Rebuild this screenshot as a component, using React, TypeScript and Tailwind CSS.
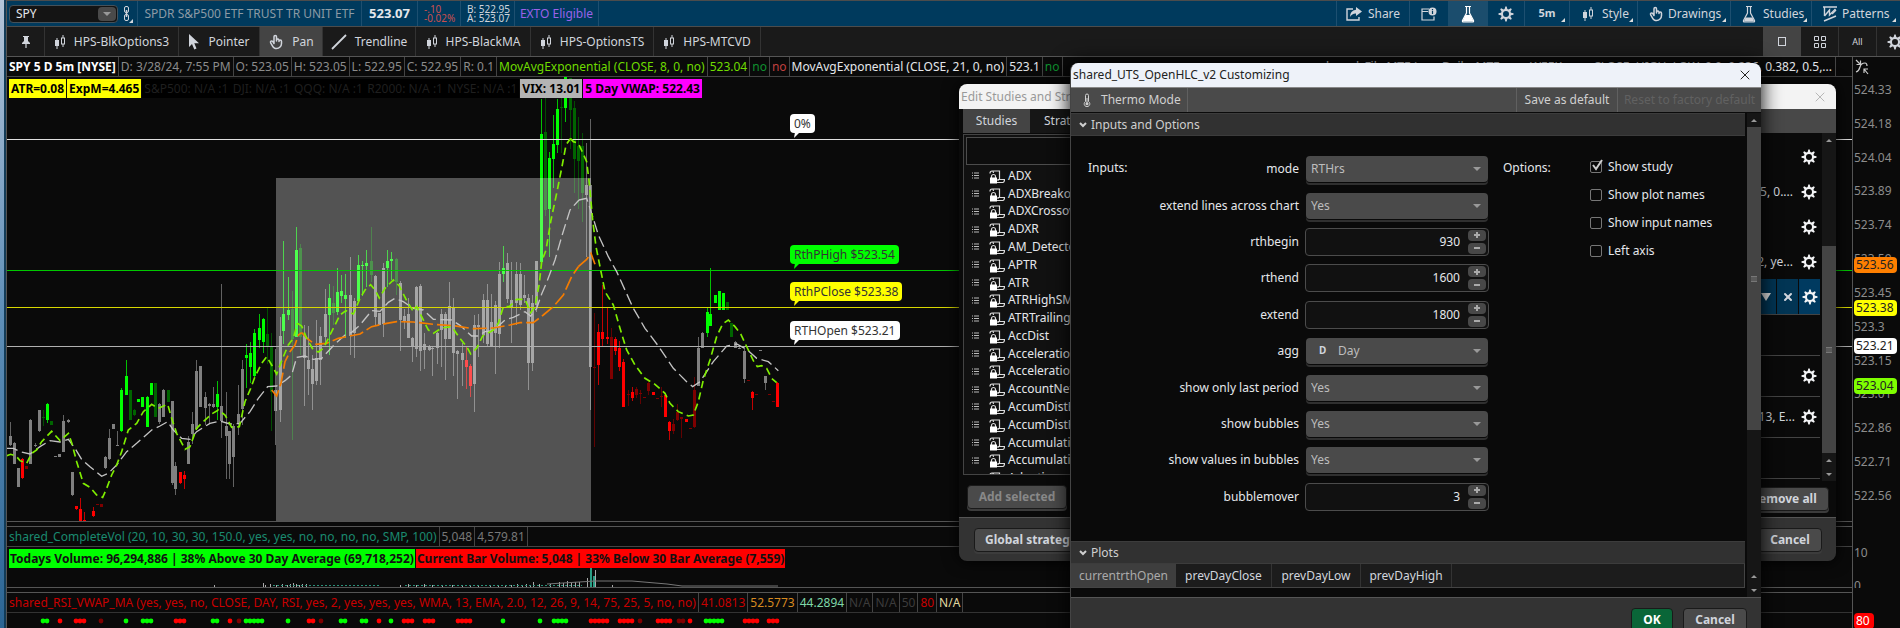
import React from "react";
import { X } from "lucide-react";
import { PiHandPointingBold } from "react-icons/pi";
import { clsx } from "clsx";

// Chart drawings use a grid of three units per pixel.
// Each bar: x, high, low, bodyTop, bodyBottom, colour key
interface Section {
  dx: number;
  dy: number;
  bars: string;
  fast: string;
  slow: string;
  vwap: string;
}

const barColors: Record<string, string> = {
  g: "#00ff00",
  d: "#006400",
  w: "#808080",
  r: "#ff0000",
  m: "#7f0000",
};

const sections: Section[] = [
  {
    dx: 0,
    dy: 270,
    bars:
      "32 995 1068 1037 1066 w,44 1055 1122 1059 1122 w,56 1134 1190 1134 1190 w,69 1105 1168 1107 1164 r,81 1128 1137 1128 1137 m,93 987 1122 989 1122 w,106 1058 1072 1065 1069 w,118 960 1026 960 1024 w,130 960 1008 981 984 d,143 940 998 941 990 g,155 994 1005 994 1004 d,168 1097 1101 1098 1101 w,180 1092 1101 1092 1101 w,192 975 1087 993 1086 w,206 986 999 989 996 w,217 1147 1217 1147 1216 w,229 1247 1260 1249 1258 r,242 1223 1292 1257 1292 r,254 1265 1292 1290 1292 r,280 1252 1281 1262 1279 r,292 1242 1245 1242 1245 m,306 1241 1252 1242 1251 m,317 1098 1137 1100 1135 w,329 1018 1110 1043 1108 w,342 1001 1017 1002 1017 w,353 1022 1068 1064 1068 w,366 893 1026 899 1023 g,379 810 916 857 915 g,391 899 990 899 990 d,405 957 977 960 975 d,417 927 936 927 936 g,428 920 951 920 951 g,442 918 1011 920 1010 g,454 879 915 879 915 g,466 879 982 879 982 d,479 939 1001 943 995 w,491 898 982 899 982 w,505 899 936 899 936 d,517 934 1185 934 1180 w,527 1116 1216 1128 1198 w,541 1147 1182 1147 1179 r,553 1143 1198 1156 1168 r,565 1038 1122 1056 1122 w,578 967 1062 1003 1031 w,590 810 1018 844 1017 w,602 828 950 828 950 w,616 906 1006 920 955 w,628 940 1003 942 948 w,640 892 953 942 950 w,653 872 990 912 951 g,664 583 1044 949 992 w,679 906 1168 1007 1038 w,690 1022 1168 1022 1122 w,701 1003 1190 1009 1100 w,716 886 1036 973 1002 w,727 810 1006 837 957 w,740 763 895 796 804 g,752 757 880 790 831 g,765 716 862 729 858 g,778 673 773 714 750 g,790 684 790 686 755 g,802 652 822 732 770 d,815 730 1022 768 905 d,827 778 1065 900 962 w,841 682 995 739 960 w,852 452 762 672 723 g,865 562 691 660 674 g,877 603 1050 658 748 d,889 410 740 480 740 g,901 462 795 474 740 d",
    fast: "20,1097 32,1093 48,1098 60,1112 80,1120 95,1090 110,1080 125,1055 155,1024 180,1052 205,1030 215,1058 230,1115 250,1180 270,1192 290,1215 308,1222 320,1195 335,1155 350,1125 365,1085 385,1020 410,1000 430,965 455,943 475,955 503,943 515,985 530,1030 555,1078 570,1070 590,1015 610,995 635,972 655,960 675,975 695,1012 718,1010 735,935 752,895 765,860 785,820 800,800 815,825 830,852 850,800 865,765 880,745 892,700",
    slow: "20,1075 40,1075 60,1085 90,1092 120,1070 150,1052 180,1056 205,1048 225,1075 245,1108 270,1130 305,1159 325,1150 350,1125 380,1085 410,1060 455,1020 480,1008 503,995 520,1020 545,1045 570,1048 590,1025 630,1000 660,993 690,1002 720,1000 750,965 775,925 803,890 830,888 855,872 875,855 890,802",
    vwap: "815,900 830,918 843,880 855,815 870,785 885,765 895,735 905,728",
  },
  {
    dx: 780,
    dy: 270,
    bars:
      "134 706 948 736 803 w,146 708 914 809 837 w,158 796 960 837 882 w,171 690 885 804 873 w,183 710 885 738 810 w,196 597 764 672 740 w,208 582 795 624 675 g,221 588 705 640 668 d,234 534 675 606 667 g,246 554 640 603 618 g,258 552 745 616 626 g,271 500 795 616 738 w,283 625 804 632 730 w,296 494 632 526 632 g,307 513 618 524 528 g,320 480 590 518 528 g,334 410 575 513 555 d,346 555 705 558 682 w,358 668 706 668 706 w,371 520 740 534 702 w,382 480 590 513 534 g,395 487 570 507 513 g,409 503 615 508 575 d,421 574 782 578 690 w,433 656 717 679 692 w,446 625 745 673 745 w,458 740 816 744 768 w,470 588 802 590 777 w,482 582 842 588 782 w,494 730 838 763 780 w,508 765 782 768 780 w,519 770 858 774 777 w,533 727 823 730 775 w,545 657 830 672 720 w,557 665 870 672 748 w,570 576 748 648 748 w,582 625 858 652 790 w,594 781 928 784 791 w,607 758 887 788 809 w,619 770 898 809 830 r,633 823 920 827 887 r,645 675 967 706 882 w,657 672 802 705 710 w,670 612 760 631 735 w,682 582 770 630 761 w,694 612 768 695 768 w,706 632 852 644 730 w,719 515 774 552 732 w,731 468 575 533 552 g,744 490 640 518 628 w,756 516 760 630 655 w,769 516 705 552 640 w,781 520 660 553 645 w,793 555 640 615 625 w,806 612 900 624 818 w,818 616 844 640 818 w,830 513 665 514 645 w,844 27 520 133 515 g,856 22 378 127 360 d,869 185 500 204 356 g,880 74 295 162 206 g,892 28 190 58 165 g,906 22 190 50 55 d,917 -38 97 -38 55 g,931 -36 178 -36 60 d,943 34 310 54 207 d",
    fast: "113,700 125,708 140,745 160,780 175,786 190,775 205,745 225,705 240,675 258,662 280,672 300,625 315,600 332,584 345,600 358,624 375,595 400,570 418,588 440,632 460,665 470,650 485,680 505,720 520,730 545,714 575,710 600,745 620,770 632,792 650,775 668,738 700,720 715,700 730,650 748,650 770,628 795,628 812,668 825,650 838,580 845,515 858,480 873,390 890,310 905,235 918,165 931,146",
    slow: "110,802 135,798 160,808 185,805 225,762 255,735 275,727 300,705 335,662 360,664 385,637 405,625 430,635 460,655 490,660 520,688 575,690 600,706 635,738 655,738 675,725 700,722 735,690 760,682 795,665 812,678 830,655 845,612 862,572 885,510 905,440 930,360 957,330",
    vwap: "125,728 145,748 165,763 200,760 235,745 300,732 335,710 380,700 410,695 460,696 520,703 580,707 640,716 700,714 750,705 780,698 820,698 850,675 880,650 910,615 935,560 955,530",
  },
  {
    dx: 1560,
    dy: 210,
    bars:
      "175 140 418 228 272 d,187 188 455 228 368 d,200 218 560 346 375 w,211 148 1020 346 891 w,225 728 1132 890 893 m,237 762 945 787 885 r,249 645 828 785 808 r,262 713 821 801 808 r,275 775 928 802 926 m,287 800 855 807 844 r,300 812 904 834 891 r,312 868 1010 876 1010 r,325 961 1008 971 975 m,337 952 992 966 984 r,350 952 985 958 976 m,362 960 1003 968 972 m,375 980 984 980 984 m,386 933 975 938 962 m,400 965 976 965 976 r,412 983 986 983 986 m,424 950 1010 979 982 m,437 972 1042 975 1041 r,448 1053 1110 1055 1084 r,462 1048 1093 1061 1084 m,474 1003 1054 1025 1051 m,486 1040 1104 1040 1048 m,499 1047 1056 1047 1056 r,511 1075 1078 1075 1078 m,523 920 1075 959 1070 m,537 800 948 834 947 w,548 786 835 789 835 w,562 713 800 725 790 g,573 595 768 732 767 g,586 676 698 676 698 g,599 662 720 662 719 g,611 668 720 670 719 g,622 696 720 697 719 d,636 758 802 759 801 d,648 813 834 815 834 w,660 832 837 833 836 w,673 838 940 842 926 w,685 930 934 931 934 m,698 963 1020 966 984 r,710 971 974 971 974 m,722 841 843 841 843 w,736 917 960 918 940 w,748 971 974 971 974 m,760 993 996 993 996 m,773 937 1011 940 1010 r",
    fast: "151,205 160,215 175,220 188,248 200,275 208,340 218,450 228,530 240,590 255,665 280,705 300,775 320,840 345,885 375,925 405,943 435,970 450,1000 475,1025 505,1038 520,1035 535,995 550,930 570,870 590,800 608,762 625,750 645,770 662,792 685,840 700,872 712,890 725,887 740,895 755,925 770,938",
    slow: "177,390 200,385 215,430 235,495 265,560 290,605 340,715 375,775 415,828 460,895 500,935 518,950 540,935 580,875 620,828 650,822 680,838 710,865 745,875 775,902",
    vwap: "175,590 200,568 213,550 225,583",
  },
];

const levels = [
  { y: 62, color: "#e0e0e0" },
  { y: 193, color: "#00c800" },
  { y: 230, color: "#d8d800" },
  { y: 269, color: "#b0b0b0" },
];

const GearIcon = ({ className = "" }: { className?: string }) => (
  <svg viewBox="0 0 16 16" className={className} fill="none" stroke="currentColor">
    <circle cx="8" cy="8" r="4" strokeWidth="2" />
    {[0, 45, 90, 135, 180, 225, 270, 315].map((a) => (
      <path key={a} d="M6.4 4 L7.3 .5 H8.7 L9.6 4 Z" fill="currentColor" stroke="none" transform={`rotate(${a} 8 8)`} />
    ))}
  </svg>
);

const CandlesIcon = () => (
  <svg viewBox="0 0 12 14" className="w-3 h-3.5" fill="none" stroke="currentColor">
    <path d="M3 3v11" />
    <rect x="1" y="5" width="4" height="6" fill="currentColor" stroke="none" />
    <path d="M9 0v3M9 9v3" />
    <rect x="7.5" y="3" width="3" height="6" />
  </svg>
);

const FlaskIcon = ({ filled = false }: { filled?: boolean }) => (
  <svg viewBox="0 0 16 18" className="w-4 h-[18px]" fill="none" stroke="currentColor" strokeWidth="1.2">
    <path d="M5 1.5h6M6.5 2v6L2.5 15.5q-.4 1.5 1 1.5h9q1.4 0 1-1.5L9.5 8V2" />
    <path d={filled ? "M5.5 10h5l3 6.5h-11z" : "M4.5 12.5h7l1.7 4H2.8z"} fill="currentColor" stroke="none" />
  </svg>
);

const PinIcon = () => (
  <svg viewBox="0 0 10 14" className="w-2.5 h-3.5" fill="currentColor">
    <path d="M2 1h6v1H7v4l2 2v1H5.6v4H4.4V9H1V8l2-2V2H2z" />
  </svg>
);

const CursorIcon = () => (
  <svg viewBox="0 0 12 16" className="w-3 h-4" fill="currentColor">
    <path d="M1 0v13l3-3 2.3 5.4 2.2-1L6.3 9.3H11z" />
  </svg>
);

const TrendIcon = () => (
  <svg viewBox="0 0 16 16" className="size-4" stroke="currentColor" strokeWidth="1.8">
    <path d="M1 15L15 1" />
  </svg>
);

const LinkIcon = () => (
  <svg viewBox="0 0 10 18" className="w-2.5 h-[18px] text-gray-300" fill="none" stroke="currentColor">
    <rect x="1.5" y="1.5" width="4" height="6" rx="1.5" />
    <rect x="1.5" y="9.5" width="4" height="6" rx="1.5" />
    <path d="M3.5 5v7" strokeWidth="1.5" />
    <path d="M10 14v4H6z" fill="currentColor" stroke="none" />
  </svg>
);

const ShareIcon = () => (
  <svg viewBox="0 0 16 14" className="w-4 h-3.5" fill="none" stroke="currentColor" strokeWidth="1.4">
    <path d="M7 2H1v11h12v-3" />
    <path d="M10 0l6 4.5-6 4.5V6.5Q6 6.3 4 10 4 3.5 10 2.8z" fill="currentColor" stroke="none" />
  </svg>
);

const InfoWindowIcon = () => (
  <svg viewBox="0 0 16 14" className="w-4 h-3.5" fill="none" stroke="currentColor" strokeWidth="1.2">
    <path d="M8 2H1v11h12V9.5M1 4.5h6" />
    <circle cx="11.5" cy="4.5" r="4" fill="currentColor" stroke="none" />
    <path d="M11.5 2v1.2M11.5 4v3" stroke="#003a5d" />
  </svg>
);

const PatternIcon = () => (
  <svg viewBox="0 0 16 16" className="size-4" fill="none" stroke="currentColor" strokeWidth="1.4">
    <path d="M1 1h14M2.5 1v9M2.5 10l5-6v5l6-6M2 15l12-5" />
    <path d="M10 8l4-4" />
  </svg>
);

const ThermoIcon = () => (
  <svg viewBox="0 0 8 14" className="w-2 h-3.5" fill="none" stroke="currentColor">
    <path d="M2.5 8.5V2.5a1.5 1.5 0 0 1 3 0v6a2.8 2.8 0 1 1-3 0z" />
    <circle cx="4" cy="10.7" r="1.5" fill="currentColor" stroke="none" />
    <path d="M4 5v6" />
  </svg>
);

const ScriptLockIcon = () => (
  <svg viewBox="0 0 16 14" className="w-4 h-3.5" fill="none" stroke="#ddd" strokeWidth="1.2">
    <path d="M1 3.5Q1 1 3 1h7.5v8M3 1q1.5 0 1.5 2M8 12.5h6q1.5-.5 1.5-3H9v1.5" />
    <path d="M2.5 8V6.5a2 2 0 0 1 4 0V8" />
    <rect x="1" y="7.5" width="7" height="6" fill="#fff" stroke="none" />
  </svg>
);

const ListIcon = () => (
  <svg viewBox="0 0 7 7" className="size-[7px]" stroke="#bbb">
    <path d="M0 1h1M2 1h5M0 3.5h1M2 3.5h5M0 6h1M2 6h5" />
  </svg>
);

const Corner = () => (
  <svg viewBox="0 0 4 4" className="size-1 absolute right-1 bottom-1" fill="#ddd">
    <path d="M4 0v4H0z" />
  </svg>
);

const Triangle = ({ up = false, className = "" }: { up?: boolean; className?: string }) => (
  <svg viewBox="0 0 8 4" className={clsx("w-2 h-1", className)} fill="#999">
    <path d={up ? "M0 4l4-4 4 4z" : "M0 0h8L4 4z"} />
  </svg>
);

const TopBar = () => (
  <header className="flex h-[27px] shrink-0 border-t border-b border-[#4c4c4c] bg-[#003a5d] text-gray-300">
    <div className="relative ml-0.5 my-1 w-[109px]">
      <input aria-label="Symbol" defaultValue="SPY" className="w-full h-[18px] rounded-sm border border-[#44515a] bg-[#141414] px-1.5 text-gray-200 outline-none" />
      <button aria-label="Symbol list" className="absolute right-0.5 top-0.5 w-[18px] h-3.5 bg-[#4a4a4a] rounded-sm grid place-items-center">
        <Triangle />
      </button>
    </div>
    <div className="w-5 flex items-center justify-center border-r border-[#1d4f70]"><LinkIcon /></div>
    <div className="w-56 flex items-center justify-center text-[#8c9ba5] border-r border-[#1d4f70] whitespace-nowrap">SPDR S&amp;P500 ETF TRUST TR UNIT ETF</div>
    <div className="w-14 flex items-center justify-center font-bold text-[13px] text-gray-200 border-r border-[#1d4f70]">523.07</div>
    <div className="w-[43px] pl-1.5 flex flex-col justify-center text-[10px] leading-[9px] text-[#c8504f] border-r border-[#1d4f70]">
      <span>-.10</span>
      <span>-0.02%</span>
    </div>
    <div className="w-[54px] pl-1.5 flex flex-col justify-center text-[10px] leading-[9px] border-r border-[#1d4f70] whitespace-nowrap">
      <span>B: 522.95</span>
      <span>A: 523.07</span>
    </div>
    <div className="w-[84px] flex items-center justify-center text-[#9a62e8] border-r border-[#1d4f70] whitespace-nowrap">EXTO Eligible</div>
    <div className="flex-1" />
    <button className="w-[74px] flex items-center justify-center gap-1.5 border-l border-r border-[#1d4f70]"><ShareIcon />Share</button>
    <button aria-label="Info" className="w-[38px] grid place-items-center"><InfoWindowIcon /></button>
    <button aria-label="Edit studies" className="w-10 grid place-items-center bg-[#1b4d6d] text-white"><FlaskIcon filled /></button>
    <button aria-label="Settings" className="w-[37px] grid place-items-center border-r border-[#1d4f70]"><GearIcon className="size-4" /></button>
    <button className="relative w-[45px] font-bold text-[11px] border-r border-[#1d4f70]">5m<Corner /></button>
    <button className="relative w-[68px] pl-3 flex items-center gap-2 border-r border-[#1d4f70]"><CandlesIcon />Style<Corner /></button>
    <button className="relative w-[93px] pl-2.5 flex items-center gap-1 border-r border-[#1d4f70]"><PiHandPointingBold className="size-4" />Drawings<Corner /></button>
    <button className="relative w-[81px] pl-2.5 flex items-center gap-1.5 border-r border-[#1d4f70]"><FlaskIcon />Studies<Corner /></button>
    <button className="relative w-[88px] pl-2.5 flex items-center gap-1"><PatternIcon />Patterns<Corner /></button>
  </header>
);

const tools = [
  { label: "HPS-BlkOptions3", icon: <CandlesIcon />, width: "w-[134px]" },
  { label: "Pointer", icon: <CursorIcon />, width: "w-[81px]" },
  { label: "Pan", icon: <PiHandPointingBold className="size-4" />, width: "w-[63px]", active: true },
  { label: "Trendline", icon: <TrendIcon />, width: "w-[93px]" },
  { label: "HPS-BlackMA", icon: <CandlesIcon />, width: "w-[115px]" },
  { label: "HPS-OptionsTS", icon: <CandlesIcon />, width: "w-[123px]" },
  { label: "HPS-MTCVD", icon: <CandlesIcon />, width: "w-[107px]" },
];

const ToolBar = () => (
  <nav className="flex h-[30px] shrink-0 bg-[#1a1a1a] text-gray-300 border-b border-[#555]">
    <button aria-label="Pin" className="w-[38px] grid place-items-center border-r border-[#333]"><PinIcon /></button>
    {tools.map((t) => (
      <button key={t.label} className={clsx(t.width, "flex items-center justify-center gap-2 border-r border-[#333] whitespace-nowrap", t.active && "bg-[#444]")}>
        {t.icon}
        {t.label}
      </button>
    ))}
    <div className="flex-1" />
    <button aria-label="Single" className="w-[38px] grid place-items-center bg-[#444]">
      <svg viewBox="0 0 8 9" className="w-2 h-[9px]" fill="none" stroke="currentColor"><rect x=".5" y=".5" width="7" height="8" /></svg>
    </button>
    <button aria-label="Grid" className="w-[38px] grid place-items-center border-r border-[#333]">
      <svg viewBox="0 0 12 12" className="size-3" fill="none" stroke="currentColor">
        <path d="M.5.5h4v4h-4zM7.5.5h4v4h-4zM.5 7.5h4v4h-4zM7.5 7.5h4v4h-4z" />
      </svg>
    </button>
    <button className="w-[38px] text-[9px] border-r border-[#333]">All</button>
    <button aria-label="Grid settings" className="w-[23px] pl-2.5 overflow-hidden"><GearIcon className="size-4" /></button>
  </nav>
);

const status = [
  ["D: 3/28/24, 7:55 PM", "text-[#8c8c8c]"],
  ["O: 523.05", "text-[#8c8c8c]"],
  ["H: 523.05", "text-[#8c8c8c]"],
  ["L: 522.95", "text-[#8c8c8c]"],
  ["C: 522.95", "text-[#8c8c8c]"],
  ["R: 0.1", "text-[#8c8c8c]"],
  ["MovAvgExponential (CLOSE, 8, 0, no)", "text-[#6fdc00]"],
  ["523.04", "text-[#6fdc00]"],
  ["no", "text-[#109030]"],
  ["no", "text-[#c04040]"],
  ["MovAvgExponential (CLOSE, 21, 0, no)", "text-gray-200"],
  ["523.1", "text-gray-200"],
  ["no", "text-[#109030]"],
];

const StatusRow = () => (
  <div className="flex h-5 shrink-0 border-b border-[#444] leading-[19px] whitespace-nowrap overflow-hidden">
    <span className="px-0.5 font-bold text-white border-r border-[#444]">SPY 5 D 5m [NYSE]</span>
    {status.map(([text, color], i) => (
      <span key={i} className={clsx("px-0.5 border-r border-[#444]", color)}>{text}</span>
    ))}
    <span className="flex-1" />
    <span className="px-[3px] mr-4 text-gray-200 border-r border-[#444]">
      shared_Fib_MTF (yes, Daily, MTF, yes, WEEK, yes, CLOSE, HIGH, LOW, 0.0, 0.236, 0.382, 0.5,...
    </span>
  </div>
);

const Bubble = ({ className, children }: { className: string; children: React.ReactNode }) => (
  <div className={clsx("absolute left-[783px] h-[19px] px-1 rounded leading-[19px] text-[#333]", className)}>
    {children}
    <svg viewBox="0 0 6 6" className="absolute left-1 top-[18px] size-1.5"><path d="M1 0h5L0 6z" /></svg>
  </div>
);

const PriceChart = () => (
  <div className="relative flex-1 overflow-hidden border-b border-[#555]">
    <svg className="absolute inset-0 size-full">
      <g transform="translate(-7 -77) scale(0.33333)" shapeRendering="crispEdges">
        {sections.map((s) => (
          <g key={s.dx} transform={`translate(${s.dx} ${s.dy})`}>
            {s.bars.split(",").map((b) => {
              const [x, hi, lo, top, bot, c] = b.split(" ");
              return (
                <g key={x} fill={barColors[c]}>
                  <rect x={+x - 1.5} y={+hi} width={3} height={+lo - +hi} opacity={0.75} />
                  <rect x={+x - 4.5} y={+top} width={9} height={Math.max(3, +bot - +top)} />
                </g>
              );
            })}
          </g>
        ))}
      </g>
      <rect x="269" y="101" width="315" height="100%" fill="#fff" opacity="0.3" />
      {levels.map((l) => (
        <rect key={l.y} x="0" y={l.y} width="100%" height="1" fill={l.color} />
      ))}
      <g transform="translate(-7 -77) scale(0.33333)" fill="none">
        {sections.map((s) => (
          <g key={s.dx} transform={`translate(${s.dx} ${s.dy})`}>
            <polyline points={s.slow} stroke="#c4c4c4" strokeWidth="4" strokeDasharray="34 14" />
            <polyline points={s.vwap} stroke="#f57c00" strokeWidth="5" strokeDasharray="42 12" />
            <polyline points={s.fast} stroke="#7fee00" strokeWidth="5" strokeDasharray="22 13" />
          </g>
        ))}
      </g>
    </svg>
    <div className="relative flex pt-0.5 pl-0.5 gap-px font-bold leading-[19px] text-black whitespace-nowrap">
      <span className="bg-[#ffff00] px-0.5">ATR=0.08</span>
      <span className="bg-[#ffff00] px-0.5">ExpM=4.465</span>
      <div className="flex w-[377px] justify-between overflow-hidden bg-black font-normal text-[#1f1f1f]">
        <span className="px-0.5">S&amp;P500: N/A :1</span>
        <span className="px-0.5">DJI: N/A :1</span>
        <span className="px-0.5">QQQ: N/A :1</span>
        <span className="px-0.5">R2000: N/A :1</span>
        <span className="px-0.5">NYSE: N/A :1</span>
      </div>
      <span className="bg-[#b4b4b4] px-0.5">VIX: 13.01</span>
      <span className="bg-[#ff00ff] px-0.5">5 Day VWAP: 522.43</span>
    </div>
    <Bubble className="top-[37px] bg-white fill-white">0%</Bubble>
    <Bubble className="top-[168px] bg-[#00ff00] fill-[#00ff00]">RthPHigh $523.54</Bubble>
    <Bubble className="top-[205px] bg-[#ffff00] fill-[#ffff00]">RthPClose $523.38</Bubble>
    <Bubble className="top-[244px] bg-white fill-white">RTHOpen $523.21</Bubble>
  </div>
);

const volumeBars = [
  [214, 2], [263, 4], [265, 2], [270, 3], [276, 2], [282, 3], [287, 2], [290, 3], [293, 4], [296, 3], [299, 2], [302, 3], [306, 3], [400, 2], [408, 3], [416, 2], [424, 3], [432, 2], [442, 2],
  [452, 2], [462, 2], [470, 2], [478, 2], [490, 2], [498, 2], [505, 2], [511, 2], [517, 3], [522, 2], [526, 3], [530, 2], [533, 5], [539, 3], [550, 3], [559, 5], [563, 4], [567, 6], [571, 4], [575, 5], [579, 5], [587, 9], [595, 17], [612, 2],
];

const VolumePanel = () => (
  <section className="relative h-[62px] mt-1 shrink-0 border-t border-b border-[#555]">
    <div className="flex h-5 border-b border-[#444] leading-[19px] text-[#777]">
      <span className="px-0.5 text-[#1a8a70]">shared_CompleteVol (20, 10, 30, 30, 150.0, yes, yes, no, no, no, no, SMP, 100)</span>
      <span className="px-0.5 border-l border-[#444]">5,048</span>
      <span className="px-0.5 border-l border-r border-[#444]">4,579.81</span>
    </div>
    <svg className="absolute left-0 bottom-0 w-full h-5" shapeRendering="crispEdges">
      {volumeBars.map(([x, h]) => <rect key={x} x={x - 7} y={20 - h} width="1" height={h} fill="#aaa" />)}
      <path d="M266 18.5H372M398 18.5H575" stroke="#2a8f78" strokeDasharray="2 2" />
      <rect x="583" y="0" width="2" height="20" fill="#2a9d84" />
      <rect x="586" y="9" width="2" height="11" fill="#2a9d84" />
      <path d="M540 17L588 14H625L660 17L675 19H771" stroke="#777" fill="none" shapeRendering="auto" />
    </svg>
    <div className="relative flex pt-0.5 pl-0.5 gap-px font-bold leading-[19px] text-[#111] whitespace-nowrap">
      <span className="bg-[#00ff00] px-px">Todays Volume: 96,294,886 | 38% Above 30 Day Average (69,718,252)</span>
      <span className="bg-[#ff0000] px-px">Current Bar Volume: 5,048 | 33% Below 30 Bar Average (7,559)</span>
    </div>
  </section>
);

// start x, count, colour key
const dots: [number, number, string][] = [
  [43, 2, "g"], [60, 1, "r"], [76, 3, "r"], [101, 1, "m"], [126, 1, "g"], [143, 3, "g"], [176, 3, "r"], [213, 2, "g"], [230, 1, "r"], [239, 1, "m"],
  [246, 5, "g"], [288, 1, "g"], [309, 2, "r"], [321, 1, "m"], [341, 2, "g"], [362, 2, "g"], [379, 1, "r"], [391, 1, "g"], [404, 3, "r"], [425, 3, "r"],
  [458, 4, "r"], [503, 1, "g"], [540, 1, "g"], [554, 4, "g"], [591, 5, "r"], [620, 4, "r"], [640, 1, "m"], [658, 4, "r"], [679, 2, "m"], [690, 1, "r"],
  [706, 5, "g"], [745, 4, "r"], [769, 3, "r"],
];

const rsiValues = [
  ["41.0813", "text-[#c80000]"],
  ["52.5773", "text-[#d88a20]"],
  ["44.2894", "text-[#7fd8a8]"],
  ["N/A", "text-[#3c3c3c]"],
  ["N/A", "text-[#3c3c3c]"],
  ["50", "text-[#3c3c3c]"],
  ["80", "text-[#c80000]"],
  ["N/A", "text-[#e0d8a0]"],
];

const RsiPanel = () => (
  <section className="h-9 mt-1 shrink-0 border-t border-[#555]">
    <div className="flex h-5 border-b border-[#333] leading-[19px]">
      <span className="px-0.5 text-[#c80000]">shared_RSI_VWAP_MA (yes, yes, no, CLOSE, DAY, RSI, yes, 2, yes, yes, yes, WMA, 13, EMA, 2.0, 12, 26, 9, 14, 75, 25, 5, no, no)</span>
      {rsiValues.map(([v, color], i) => <span key={i} className={clsx("px-0.5 border-l border-[#444]", color, i === 7 && "border-r")}>{v}</span>)}
    </div>
    <svg className="w-full h-4">
      {dots.map(([x, n, c]) =>
        Array.from({ length: n }, (_, i) => <circle key={`${x}-${i}`} cx={x - 7 + i * 4} cy="8" r="2.4" fill={barColors[c]} />)
      )}
    </svg>
  </section>
);

const prices = ["524.33", "524.18", "524.04", "523.89", "523.74", "523.59", "523.45", "523.3", "523.15", "523.01", "522.86", "522.71", "522.56"];

const PriceAxis = () => (
  <aside className="relative w-[48px] shrink-0 border-l border-[#555] text-[#8c8c8c]">
    <svg viewBox="0 0 14 16" className="absolute left-0.5 top-0.5 w-3.5 h-4" fill="none" stroke="#ccc" strokeWidth="1.2">
      <path d="M1 1l4 4M5.5 1.5v4h-4M1 13q3-1 4-5t5-4q2 0 2 3M9 10l4 5M9 14v-4h4" />
    </svg>
    <div className="h-[422px] mt-[25px] flex flex-col justify-between pl-px leading-4">
      {prices.map((p) => <span key={p}>{p}</span>)}
    </div>
    <span className="absolute left-px top-[200px] w-[43px] rounded-sm px-0.5 leading-4 bg-[#ff7f00] text-[#222]">523.56</span>
    <span className="absolute left-px top-[243px] w-[43px] rounded-sm px-0.5 leading-4 bg-[#ffff00] text-[#222]">523.38</span>
    <span className="absolute left-px top-[281px] w-[43px] rounded-sm px-0.5 leading-4 bg-white text-[#222]">523.21</span>
    <span className="absolute left-px top-[321px] w-[43px] rounded-sm px-0.5 leading-4 bg-[#7fff00] text-[#222]">523.04</span>
    <span className="absolute left-px top-[488px] leading-4">10</span>
    <span className="absolute left-px top-[521px] leading-4 h-2.5 overflow-hidden">0</span>
    <span className="absolute left-px top-[556px] w-5 rounded-sm px-0.5 leading-4 bg-[#ff0000] text-white">80</span>
  </aside>
);

const studies = [
  "ADX", "ADXBreakouts", "ADXCrossover", "ADXR", "AM_Detector", "APTR", "ATR", "ATRHighSMABreakouts", "ATRTrailingStop", "AccDist",
  "AccelerationBands", "AccelerationDeceleration", "AccountNetLiq", "AccumDistBuyPr", "AccumDistPrVol", "AccumulationDistribution", "AccumulationSwingIndex", "Adaptive",
];

const dialogButton = "h-6 rounded-sm border border-[#1a1a1a] bg-[#4a4a4a] font-bold text-gray-300 shadow-[0_2px_0_#3c3c3c] whitespace-nowrap";

const ScrollArrow = ({ up = false }: { up?: boolean }) => (
  <button aria-label={up ? "Scroll up" : "Scroll down"} className="h-3.5 w-full grid place-items-center"><Triangle up={up} className="w-1.5 h-[3px]" /></button>
);

const Grip = () => (
  <span className="w-1.5 h-1.5 border-y border-[#777] bg-[#5a5a5a]" />
);

const gear = <GearIcon className="size-4 text-gray-100" />;

const StudiesDialog = () => (
  <div className="absolute left-[959px] top-[84px] w-[877px] h-[477px] flex flex-col rounded-lg overflow-hidden bg-[#0a0a0a] shadow-[0_0_16px_#000]">
    <div className="h-[25px] shrink-0 px-0.5 flex items-center justify-between bg-[#f3f3f3] text-[#999]">
      <span>Edit Studies and Strategies</span>
      <button aria-label="Close" className="pr-1.5"><X className="size-4" strokeWidth={1} /></button>
    </div>
    <div className="flex-1 flex min-h-0">
      <div className="w-[400px] pl-1 flex flex-col">
        <div className="flex h-6 text-gray-300">
          <button className="w-[67px] bg-[#444]">Studies</button>
          <button className="px-3.5 bg-[#161616]">Strategies</button>
        </div>
        <div className="h-[341px] mt-px border border-[#444] bg-[#111]">
          <input aria-label="Search studies" className="block m-0.5 w-[380px] h-7 border border-[#4c4c4c] bg-[#0d0d0d] outline-none" />
          <div className="h-[307px] overflow-hidden">
            <ul className="h-[320px] grid auto-rows-fr text-gray-200">
              {studies.map((s) => (
                <li key={s} className="flex items-center pl-2 min-h-0 leading-4">
                  <ListIcon />
                  <span className="ml-2.5 mr-[3px] pt-0.5"><ScriptLockIcon /></span>
                  {s}
                </li>
              ))}
            </ul>
          </div>
        </div>
        <button disabled className={clsx(dialogButton, "w-[100px] ml-1 mt-2.5 text-[#888]!")}>Add selected</button>
      </div>
      <div className="flex-1 flex flex-col">
        <div className="h-6 bg-[#484848]" />
        <div className="flex h-[348px]">
          <div className="flex-1 flex flex-col pt-1.5 text-gray-300">
            {["", "5, 0....", "", "2, ye..."].map((t, i) => (
              <div key={i} className="h-[35px] flex items-center justify-end gap-2 pr-[3px]">
                <span>{t}</span>{gear}
              </div>
            ))}
            <div className="h-9 flex justify-end border-b border-[#444]">
              <button aria-label="Move down" className="w-[22px] bg-[#023554] grid place-items-center border-r border-[#0a0a0a]">
                <svg viewBox="0 0 10 8" className="w-2.5 h-2" fill="#ddd"><path d="M0 0h10L5 8z" /></svg>
              </button>
              <button aria-label="Remove" className="w-[22px] bg-[#023554] grid place-items-center border-r border-[#0a0a0a]"><X className="size-3" strokeWidth={4} /></button>
              <button aria-label="Study settings" className="w-[21px] bg-[#003a60] grid place-items-center">{gear}</button>
            </div>
            <div className="h-[41px] border-b border-[#444]" />
            <div className="h-[41px] border-b border-[#444] flex items-center justify-end pr-[3px]">{gear}</div>
            <div className="h-[41px] border-b border-[#444] flex items-center justify-end gap-1.5 pr-[3px]"><span>13, E...</span>{gear}</div>
            <div className="h-[41px] border-b border-[#444]" />
          </div>
          <div className="w-3.5 ml-0.5 flex flex-col bg-[#161616]">
            <ScrollArrow up />
            <div className="mt-[99px] h-[207px] bg-[#444] grid place-items-center"><Grip /></div>
            <ScrollArrow up />
            <ScrollArrow />
          </div>
        </div>
        <button className={clsx(dialogButton, "w-[90px] ml-auto mr-[7px] mt-1.5")}>Remove all</button>
      </div>
    </div>
    <div className="h-11 shrink-0 flex items-center justify-between pl-[15px] pr-3.5 border-t border-[#555] bg-[#333]">
      <button className={clsx(dialogButton, "px-2.5")}>Global strategy settings...</button>
      <button className={clsx(dialogButton, "w-16")}>Cancel</button>
    </div>
  </div>
);

interface FieldDef {
  label: string;
  value: string;
  kind: "select" | "number";
  prefix?: string;
}

const fields: FieldDef[] = [
  { label: "mode", value: "RTHrs", kind: "select" },
  { label: "extend lines across chart", value: "Yes", kind: "select" },
  { label: "rthbegin", value: "930", kind: "number" },
  { label: "rthend", value: "1600", kind: "number" },
  { label: "extend", value: "1800", kind: "number" },
  { label: "agg", value: "Day", kind: "select", prefix: "D" },
  { label: "show only last period", value: "Yes", kind: "select" },
  { label: "show bubbles", value: "Yes", kind: "select" },
  { label: "show values in bubbles", value: "Yes", kind: "select" },
  { label: "bubblemover", value: "3", kind: "number" },
];

const Field = ({ field }: { field: FieldDef }) => {
  const id = field.label.replace(/ /g, "-");
  return (
    <div className="flex items-center justify-end gap-1.5">
      <label htmlFor={id} className="text-gray-200">{field.label}</label>
      {field.kind === "select" ? (
        <div className="relative w-[184px] px-px">
          {field.prefix && <span className="absolute left-3.5 top-[5px] text-[10px] font-bold text-gray-300">{field.prefix}</span>}
          <select
            id={id}
            className={clsx("block w-full h-[26px] appearance-none rounded-sm bg-[#4a4a4a] text-[#bdbdbd] outline-none shadow-[0_1px_0_#0a0a0a,0_3px_0_#303030]", field.prefix ? "pl-8" : "pl-[5px]")}
          >
            <option>{field.value}</option>
          </select>
          <Triangle className="absolute right-2 top-[11px]" />
        </div>
      ) : (
        <div className="w-[184px] h-7 flex items-center rounded-sm border border-[#4c4c4c] bg-[#111]">
          <input id={id} defaultValue={field.value} className="flex-1 min-w-0 pr-2 text-right text-gray-200 bg-transparent outline-none" />
          <div className="flex flex-col gap-0.5 pr-0.5 text-[#aaa]">
            <button aria-label="Increase" className="w-[18px] h-[11px] rounded-sm bg-[#484848] grid place-items-center">
              <svg viewBox="0 0 6 6" className="size-1.5" stroke="currentColor" strokeWidth="2"><path d="M3 0v6M0 3h6" /></svg>
            </button>
            <button aria-label="Decrease" className="w-[18px] h-[11px] rounded-sm bg-[#484848] grid place-items-center">
              <svg viewBox="0 0 6 6" className="size-1.5" stroke="currentColor" strokeWidth="2"><path d="M0 3h6" /></svg>
            </button>
          </div>
        </div>
      )}
    </div>
  );
};

const CheckOption = ({ label, checked = false }: { label: string; checked?: boolean }) => (
  <label className="relative h-7 flex items-center gap-1.5">
    <input type="checkbox" defaultChecked={checked} className="size-3 appearance-none rounded-xs border border-[#777]" />
    {checked && (
      <svg viewBox="0 0 12 12" className="absolute left-0.5 top-1.5 size-3" fill="none" stroke="#ccc" strokeWidth="2"><path d="M1 6l3 4 6-9" /></svg>
    )}
    {label}
  </label>
);

const SectionHeader = ({ children }: { children: React.ReactNode }) => (
  <h3 className="h-[23px] shrink-0 pl-2 flex items-center gap-1 bg-[#313131] border-y border-[#3c3c3c] text-[#cfcfcf]">
    <svg viewBox="0 0 8 6" className="w-2 h-1.5" fill="none" stroke="currentColor" strokeWidth="2"><path d="M1 1l3 3 3-3" /></svg>
    {children}
  </h3>
);

const CustomizingDialog = () => (
  <div className="absolute left-[1070px] top-[63px] w-[691px] h-[600px] flex flex-col rounded-t-lg overflow-hidden border-l border-[#444] bg-[#0a0a0a] shadow-[0_0_20px_#000]">
    <div className="h-6 shrink-0 pl-0.5 pr-2 flex items-center justify-between bg-[#eef2f9] text-[#222]">
      <span>shared_UTS_OpenHLC_v2 Customizing</span>
      <button aria-label="Close"><X className="size-4" strokeWidth={1.5} /></button>
    </div>
    <div className="h-[25px] shrink-0 flex bg-[#4a4a4a] border-t border-[#888] text-[#d0d0d0]">
      <button className="w-[117px] pl-3 flex items-center gap-2.5 border-r border-[#606060]"><ThermoIcon />Thermo Mode</button>
      <span className="flex-1" />
      <button className="w-[101px] border-l border-[#606060]">Save as default</button>
      <button disabled className="w-[144px] border-l border-[#606060] text-[#616161]">Reset to factory default</button>
    </div>
    <div className="h-[485px] pt-px flex shrink-0">
      <div className="flex-1 flex flex-col">
        <SectionHeader>Inputs and Options</SectionHeader>
        <div className="flex h-[405px] pt-[15px] text-gray-200">
          <p className="pl-[17px] pt-2">Inputs:</p>
          <div className="h-[364px] flex-1 grid auto-rows-fr">
            {fields.map((f) => <Field key={f.label} field={f} />)}
          </div>
          <p className="w-[101px] pl-3.5 pt-2">Options:</p>
          <div className="w-[155px] pt-0.5">
            <CheckOption label="Show study" checked />
            <CheckOption label="Show plot names" />
            <CheckOption label="Show input names" />
            <CheckOption label="Left axis" />
          </div>
        </div>
        <SectionHeader>Plots</SectionHeader>
        <div className="flex h-6 bg-[#1c1c1c] border-b border-r border-[#444] text-gray-300">
          <button className="w-[105px] bg-[#3e3e3e] text-[#aaa]">currentrthOpen</button>
          <button className="w-[96px] border-r border-[#333]">prevDayClose</button>
          <button className="w-[89px] border-r border-[#333]">prevDayLow</button>
          <button className="w-[91px] border-r border-[#333]">prevDayHigh</button>
        </div>
      </div>
      <div className="w-3.5 ml-0.5 flex flex-col bg-[#161616]">
        <ScrollArrow up />
        <div className="h-[303px] bg-[#444] grid place-items-center"><Grip /></div>
        <div className="flex-1" />
        <ScrollArrow up />
        <ScrollArrow />
      </div>
    </div>
    <div className="flex-1 flex justify-end gap-2.5 pt-2.5 pr-3.5 bg-[#333] border-t border-[#555]">
      <button className="h-6 w-[42px] rounded-sm border border-[#1a1a1a] bg-[#0a6638] font-bold text-white">OK</button>
      <button className={clsx(dialogButton, "w-16")}>Cancel</button>
    </div>
  </div>
);

export default function App() {
  return (
    <div className="relative flex h-screen overflow-hidden bg-[#0a0a0a] font-['Noto_Sans',sans-serif] text-[12px]">
      <div className="w-1.5 shrink-0 bg-linear-to-b from-[#b4c4d8] via-[#5f8fb8] to-[#2b6594] border-r-2 border-[#123b57]" />
      <div className="flex-1 min-w-0 flex flex-col border-l border-[#555]">
        <TopBar />
        <ToolBar />
        <div className="flex-1 min-h-0 flex">
          <main className="flex-1 min-w-0 flex flex-col">
            <StatusRow />
            <PriceChart />
            <VolumePanel />
            <RsiPanel />
          </main>
          <PriceAxis />
        </div>
      </div>
      <StudiesDialog />
      <CustomizingDialog />
    </div>
  );
}
